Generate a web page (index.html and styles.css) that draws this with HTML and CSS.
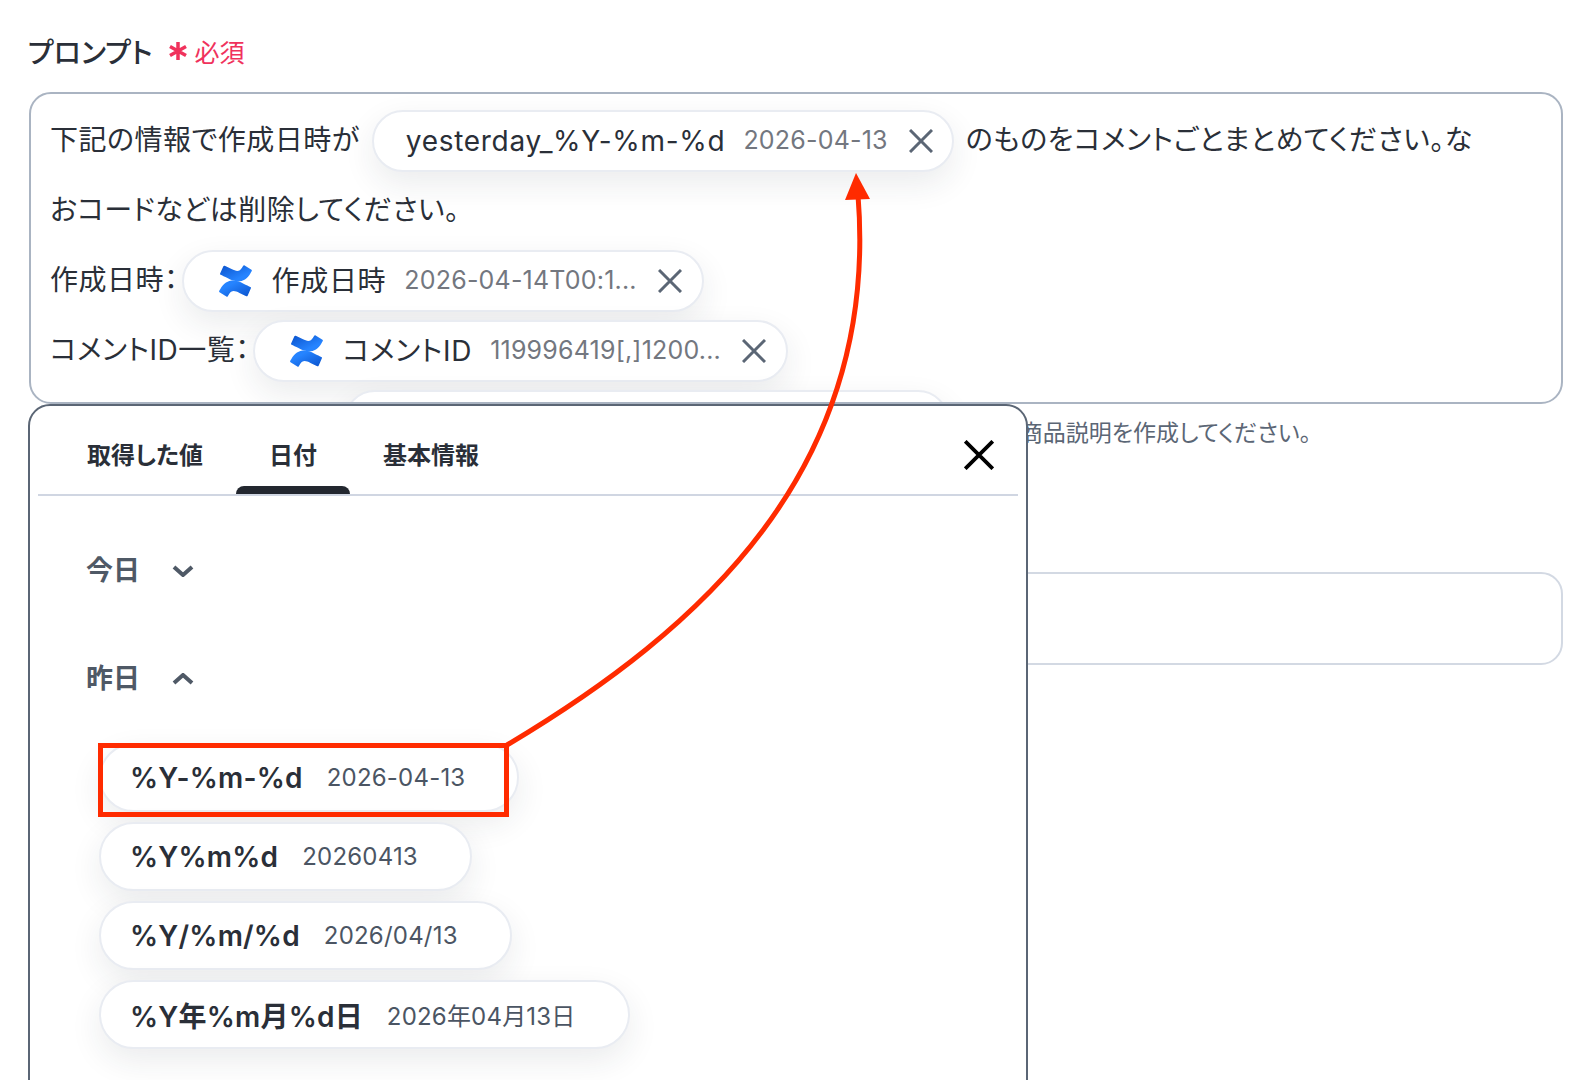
FILE: index.html
```html
<!DOCTYPE html>
<html lang="ja">
<head>
    <meta charset="UTF-8">
    <meta name="viewport" content="width=device-width, initial-scale=1.0">
    <title>プロンプト</title>
    <link rel="stylesheet" href="styles.css">
</head>
<body>
    <svg class="defs" width="0" height="0">
        <defs>
            <linearGradient id="confA" x1="1" y1="1" x2="0.3" y2="0.3">
                <stop offset="0" stop-color="#0a52cc"/>
                <stop offset="1" stop-color="#2684ff"/>
            </linearGradient>
            <linearGradient id="confB" x1="0" y1="0" x2="0.7" y2="0.7">
                <stop offset="0" stop-color="#0a52cc"/>
                <stop offset="1" stop-color="#2684ff"/>
            </linearGradient>
            <symbol id="conf" viewBox="1 3 30 26">
                <path fill="url(#confA)" d="M2.9 23.1c-.3.5-.6 1-.9 1.4-.2.4-.1.9.3 1.2l5.9 3.6c.4.3 1 .1 1.2-.3.2-.4.5-.8.9-1.4 2.4-3.9 4.8-3.4 9.1-1.4l5.8 2.8c.4.2 1 0 1.2-.4l2.8-6.3c.2-.4 0-.9-.4-1.1-1.2-.6-3.7-1.7-5.9-2.8C15.1 14 7.8 14.3 2.9 23.1z"/>
                <path fill="url(#confB)" d="M29.1 8.9c.3-.5.6-1 .9-1.4.2-.4.1-.9-.3-1.2l-5.9-3.6c-.4-.3-1-.1-1.2.3-.2.4-.5.8-.9 1.4-2.4 3.9-4.8 3.4-9.1 1.4L6.8 2.9c-.4-.2-1 0-1.2.4L2.8 9.6c-.2.4 0 .9.4 1.1 1.2.6 3.7 1.7 5.9 2.8C16.9 18 24.2 17.7 29.1 8.9z"/>
            </symbol>
            <symbol id="cross" viewBox="0 0 24 24">
                <path d="M1 1 23 23M23 1 1 23"/>
            </symbol>
        </defs>
    </svg>

    <div class="page">
        <div class="label-row">
            <span class="label">プロンプト</span>
            <span class="required">
                <svg class="star" viewBox="0 0 20 20"><path d="M10 1v18M2 5.5l16 9M18 5.5 2 14.5"/></svg>
                必須
            </span>
        </div>

        <div class="prompt-box">
            <div class="prompt-line">下記の情報で作成日時が<span class="chip chip-first"><span class="chip-name">yesterday_%Y-%m-%d</span><span class="chip-value">2026-04-13</span><svg class="chip-x"><use href="#cross"/></svg></span>のものをコメントごとまとめてください。な</div>
            <div class="prompt-line">おコードなどは削除してください。</div>
            <div class="prompt-line">作成日時：<span class="chip chip-icon"><svg class="conf-icon"><use href="#conf"/></svg><span class="chip-name">作成日時</span><span class="chip-value">2026-04-14T00:1...</span><svg class="chip-x"><use href="#cross"/></svg></span></div>
            <div class="prompt-line">コメントID一覧：<span class="chip chip-icon"><svg class="conf-icon"><use href="#conf"/></svg><span class="chip-name">コメントID</span><span class="chip-value">119996419[,]1200...</span><svg class="chip-x"><use href="#cross"/></svg></span></div>
            <div class="prompt-line"><span class="chip chip-cut"></span></div>
        </div>

        <p class="helper">商品説明を作成してください。</p>

        <div class="second-box"></div>
    </div>

    <div class="popup">
        <div class="tabs">
            <span class="tab">取得した値</span>
            <span class="tab tab-active">日付</span>
            <span class="tab">基本情報</span>
            <svg class="popup-close"><use href="#cross"/></svg>
        </div>

        <div class="group">
            <span>今日</span>
            <svg class="chevron" viewBox="0 0 22 12"><path d="M2 2 11 10 20 2"/></svg>
        </div>
        <div class="group">
            <span>昨日</span>
            <svg class="chevron" viewBox="0 0 22 12"><path d="M2 10 11 2 20 10"/></svg>
        </div>

        <div class="options">
            <div class="option"><b>%Y-%m-%d</b><span>2026-04-13</span></div>
            <div class="option"><b>%Y%m%d</b><span>20260413</span></div>
            <div class="option"><b>%Y/%m/%d</b><span>2026/04/13</span></div>
            <div class="option"><b>%Y年%m月%d日</b><span>2026年04月13日</span></div>
        </div>
    </div>

    <!-- red annotation on top of the screenshot -->
    <div class="mark-box"></div>
    <svg class="mark-arrow" viewBox="0 0 1596 1080">
        <path class="mark-line" d="M507 745C700 630 880 470 858 195"/>
        <path class="mark-head" d="M856 173 870 199 845 200Z"/>
    </svg>
</body>
</html>
```

FILE: styles.css
```css
* {
    box-sizing: border-box;
}
html, body {
    margin: 0;
    padding: 0;
    height: 1080px;
    overflow: hidden;
    background: #fff;
}
body {
    position: relative;
    font-family: Inter, "Noto Sans CJK JP", sans-serif;
    font-feature-settings: "palt";
    color: #2a2f38;
}
.defs {
    position: absolute;
}
.page {
    padding: 33px 33px 0 29px;
}

/* label */
.label-row {
    display: flex;
    align-items: center;
    height: 36px;
}
.label {
    margin-left: -1px;
    font-size: 28px;
    font-weight: 500;
}
.required {
    display: flex;
    align-items: center;
    margin-left: 16px;
    font-size: 25px;
    color: #f0325c;
}
.star {
    width: 20px;
    height: 22px;
    margin-right: 6px;
    fill: none;
    stroke: #f0325c;
    stroke-width: 3.5;
}

/* prompt field */
.prompt-box {
    height: 312px;
    margin-top: 23px;
    padding: 11px 20px 0 19px;
    border: 2px solid #aab4c2;
    border-radius: 22px;
    overflow: hidden;
    font-size: 28px;
    letter-spacing: 0.5px;
    white-space: nowrap;
    background: #fff;
}
.prompt-line {
    line-height: 70px;
}
.chip {
    display: inline-flex;
    align-items: center;
    height: 62px;
    margin: 0 12px 3px;
    border: 2px solid #e9ecf2;
    border-radius: 31px;
    background: #fff;
    box-shadow: 0 12px 32px rgba(30, 40, 60, 0.09);
    letter-spacing: 0;
    line-height: 1;
    vertical-align: middle;
}
.chip-first {
    padding: 0 19px 0 32px;
}
.chip-icon {
    padding: 0 20px 0 34px;
    margin-left: 3px;
}
.chip-cut {
    width: 605px;
    margin-left: 294px;
    margin-top: 5px;
    vertical-align: top;
}
.chip-name {
    letter-spacing: 0.7px;
}
.chip-value {
    margin-left: 18px;
    font-size: 25px;
    letter-spacing: 0.2px;
    color: #73777f;
}
.chip-x {
    width: 24px;
    height: 24px;
    margin-left: 21px;
    fill: none;
    stroke: #5b6675;
    stroke-width: 3;
}
.conf-icon {
    width: 35px;
    height: 32px;
    margin-right: 19px;
}

.helper {
    margin: 15px 0 0;
    padding-right: 252px;
    text-align: right;
    font-size: 23px;
    line-height: 28px;
    color: #5b6675;
}
.second-box {
    height: 93px;
    margin-top: 125px;
    border: 2px solid #d3d9e3;
    border-radius: 22px;
}

/* popup with the value tabs */
.popup {
    position: absolute;
    left: 28px;
    top: 404px;
    width: 1000px;
    height: 720px;
    border: 2px solid #5b6675;
    border-radius: 22px;
    background: #fff;
}
.tabs {
    position: relative;
    display: flex;
    height: 90px;
    margin: 0 8px;
    padding: 0 0 0 16px;
    border-bottom: 2px solid #d0d6e2;
}
.tab {
    position: relative;
    padding: 32px 33px 0;
    font-size: 24px;
    font-weight: 600;
    line-height: 36px;
}
.tab-active::after {
    content: "";
    position: absolute;
    left: 0;
    right: 0;
    bottom: 0;
    height: 8px;
    border-radius: 8px 8px 0 0;
    background: #23272f;
}
.popup-close {
    position: absolute;
    right: 24px;
    top: 34px;
    width: 30px;
    height: 30px;
    fill: none;
    stroke: #000;
    stroke-width: 3;
}
.group {
    display: flex;
    align-items: center;
    height: 40px;
    margin: 55px 0 0 56px;
    font-size: 27px;
    font-weight: 600;
    color: #4f5966;
}
.group span {
    padding-bottom: 6px;
}
.group + .group {
    margin-top: 68px;
}
.chevron {
    width: 22px;
    height: 12px;
    margin-left: 32px;
    fill: none;
    stroke: #4f5966;
    stroke-width: 4;
}
.options {
    display: flex;
    flex-direction: column;
    align-items: flex-start;
    gap: 10px;
    margin: 44px 0 0 69px;
}
.option {
    display: flex;
    align-items: center;
    height: 69px;
    padding: 0 52px 0 29px;
    border: 2px solid #e9ecf2;
    border-radius: 35px;
    background: #fff;
    box-shadow: 0 12px 32px rgba(30, 40, 60, 0.09);
}
.option b {
    font-size: 28px;
    font-weight: 600;
    letter-spacing: 0.2px;
}
.option span {
    margin-left: 24px;
    font-size: 24px;
    letter-spacing: 0.2px;
    color: #4b5563;
}

/* annotation */
.mark-box {
    position: absolute;
    left: 98px;
    top: 743px;
    width: 411px;
    height: 74px;
    border: 5px solid #ff2b00;
}
.mark-arrow {
    position: absolute;
    left: 0;
    top: 0;
    width: 1596px;
    height: 1080px;
    pointer-events: none;
}
.mark-line {
    fill: none;
    stroke: #ff2b00;
    stroke-width: 5;
}
.mark-head {
    fill: #ff2b00;
}
```
